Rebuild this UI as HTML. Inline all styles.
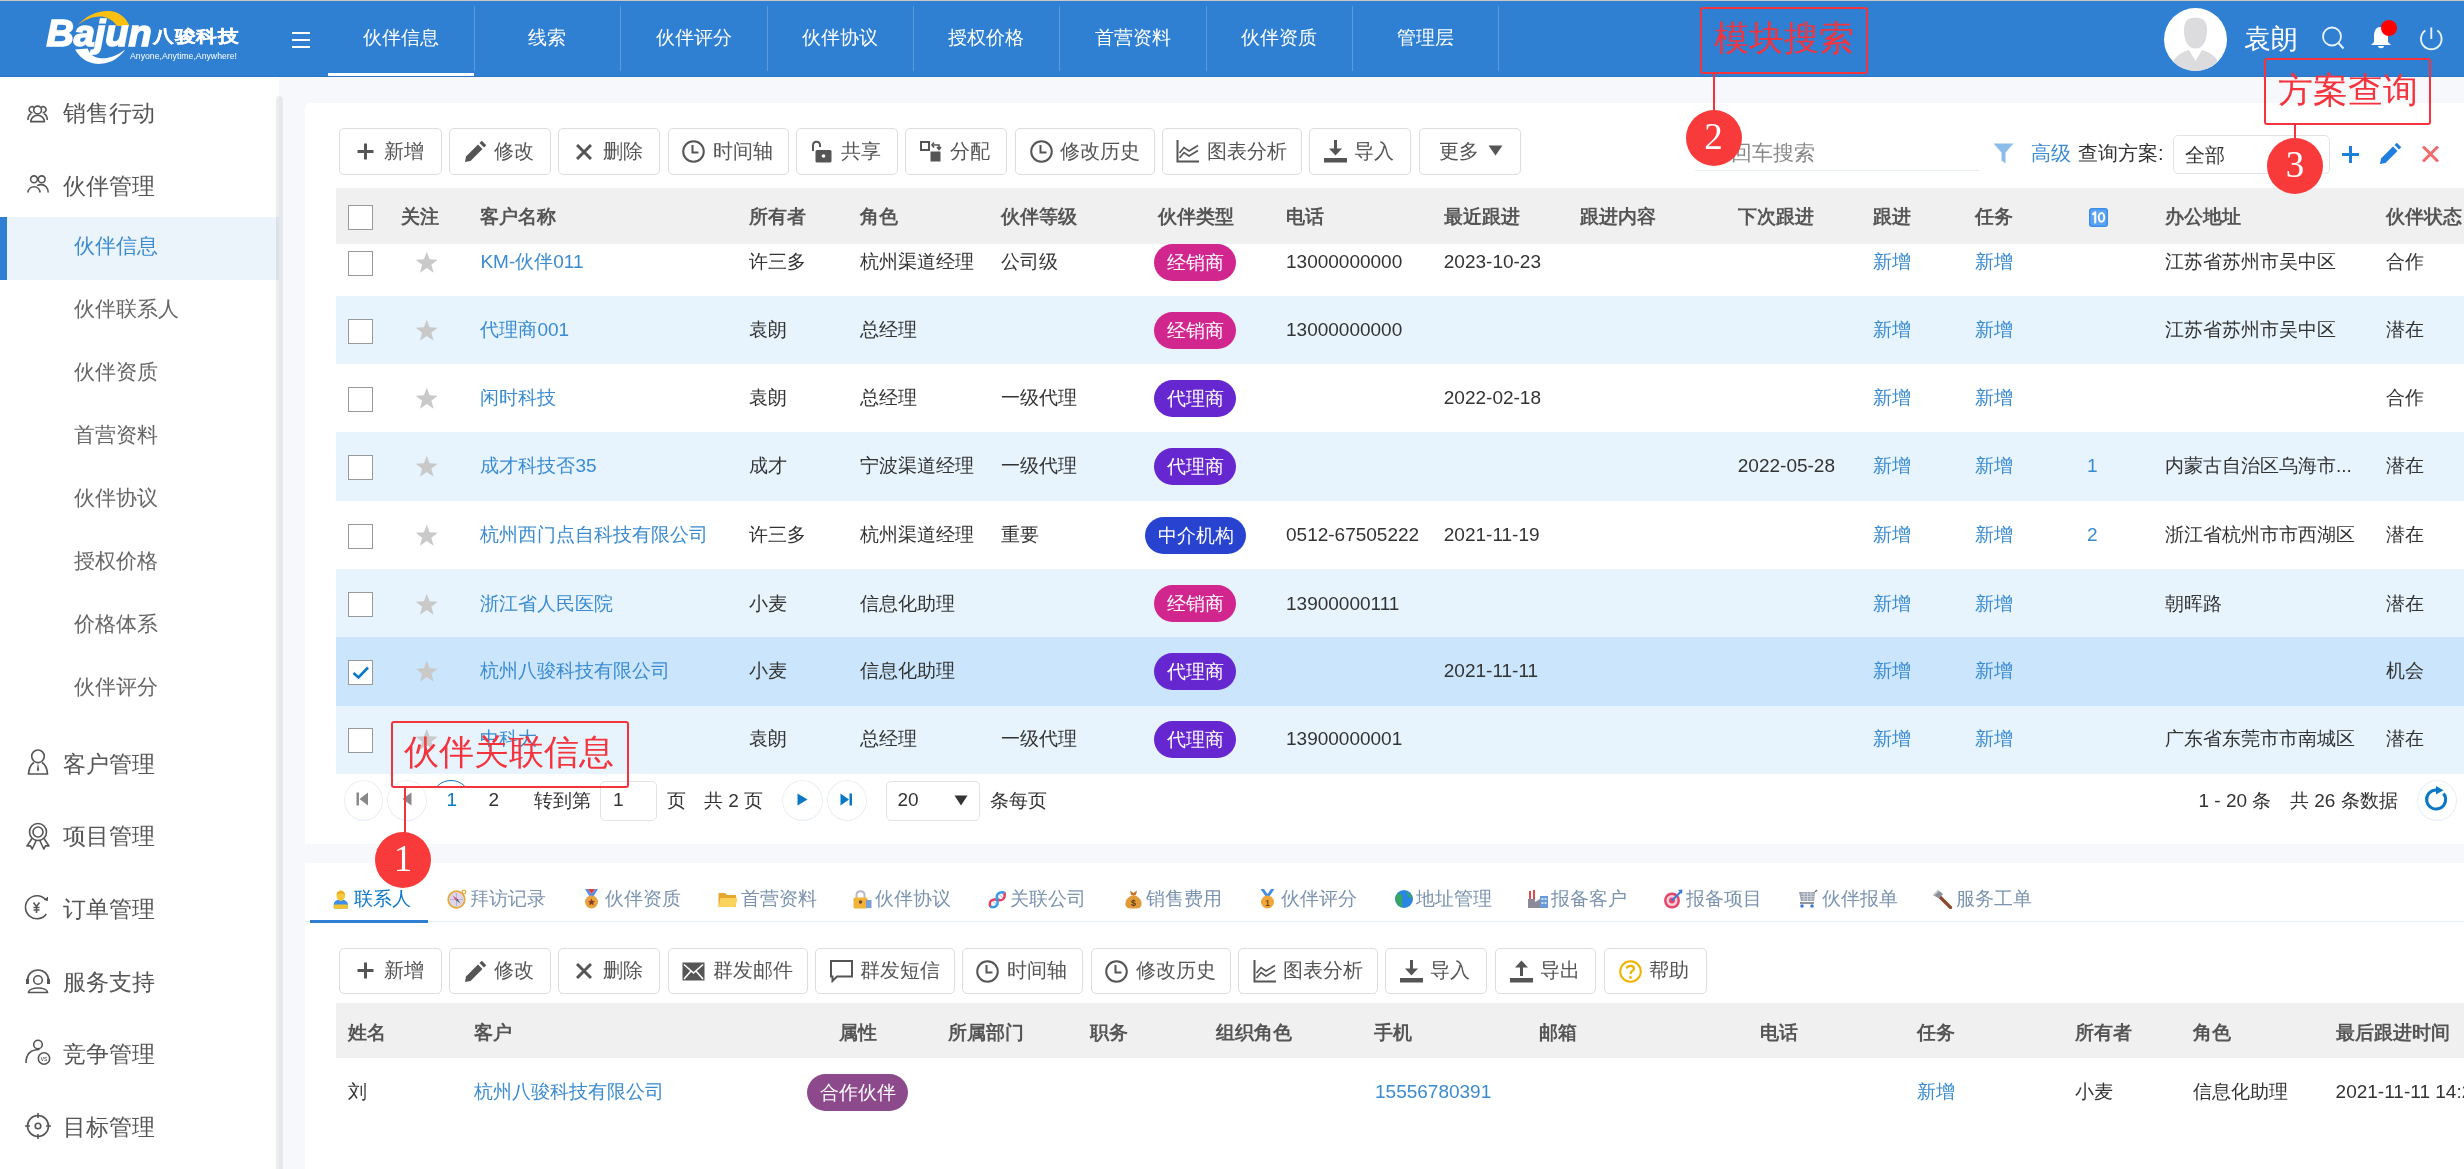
<!DOCTYPE html>
<html><head><meta charset="utf-8">
<style>
*{box-sizing:border-box;margin:0;padding:0}
html,body{width:2464px;height:1169px;overflow:hidden;background:#f6f8fc;font-family:"Liberation Sans",sans-serif;color:#333}
.abs{position:absolute}
#top{position:absolute;left:0;top:0;width:2464px;height:77px;background:#2f80d2;border-top:1px solid #c9c9c9;border-bottom:1px solid #2a76c6}
.nav{position:absolute;top:0;height:74px;width:146px;color:#fff;font-size:19px;text-align:center;line-height:74px}
.sep{position:absolute;top:5px;width:1px;height:65px;background:#5a9ade}
#side{position:absolute;left:0;top:77px;width:279px;height:1092px;background:#fff}
.mi{position:absolute;left:63px;font-size:22.5px;color:#555;line-height:30px}
.si{position:absolute;left:73.5px;font-size:20.8px;color:#666;line-height:30px}
.panel{position:absolute;background:#fff;border-radius:5px}
.btn{position:absolute;height:46px;border:1px solid #ddd;border-radius:5px;background:#fff;font-size:20px;color:#555;line-height:44px}
.th{position:absolute;font-size:19px;font-weight:bold;color:#555;line-height:24px}
.td{position:absolute;font-size:19px;color:#333;line-height:24px;white-space:nowrap}
.lk{color:#3a8bd0}
.row{position:absolute;left:336px;width:2128px;height:68px}
.cb{position:absolute;left:348px;width:25px;height:25px;border:1.5px solid #999;background:#fff}
.star{position:absolute;left:413px;color:#c8c8c8;font-size:26px;line-height:26px}
.tag{position:absolute;height:37px;border-radius:18.5px;color:#fff;font-size:19px;line-height:37px;text-align:center}

.bt{position:absolute;font-size:20px;color:#555;line-height:28px;white-space:nowrap}
html{filter:grayscale(0)}
</style></head><body>
<div id="top">
<svg class="abs" style="left:40px;top:5px" width="210" height="62" viewBox="0 0 210 62">
<path d="M38 19 C 46 10, 56 5, 68 5 C 78 5, 86 11, 89.5 20 L 77 20 C 72 13, 66 10.5, 60 10.5 C 52 10.5, 44 14, 38 19 Z" fill="#fbbf10"/>
<path d="M35 43.5 C 42 56, 54 58.5, 61 57.8 C 72 57, 80 51, 85.3 43.5 C 76 50.5, 68 52.5, 61 52.3 C 55 52, 50 49, 47.7 42.6 Z" fill="#fff"/>
<text x="6.5" y="40" font-family="Liberation Sans" font-weight="bold" font-style="italic" font-size="36" fill="#fff" stroke="#fff" stroke-width="1.6" textLength="105" lengthAdjust="spacingAndGlyphs">Bajun</text>
<text x="90" y="53" font-family="Liberation Sans" font-size="8.5" fill="#fff" textLength="107" lengthAdjust="spacingAndGlyphs">Anyone,Anytime,Anywhere!</text>
</svg>
<div class="abs" style="left:153px;top:21px;font-size:21px;font-weight:bold;color:#fff;line-height:24px;letter-spacing:0.5px;transform:scale(1,0.82);transform-origin:0 100%;-webkit-text-stroke:0.3px #fff">八骏科技</div>
<div class="abs" style="left:292px;top:31px;width:18px;height:2px;background:#fff"></div>
<div class="abs" style="left:292px;top:38px;width:18px;height:2px;background:#fff"></div>
<div class="abs" style="left:292px;top:45px;width:18px;height:2px;background:#fff"></div>
<div class="nav" style="left:328px">伙伴信息</div>
<div class="sep" style="left:474px"></div>
<div class="nav" style="left:474px">线索</div>
<div class="sep" style="left:620px"></div>
<div class="nav" style="left:621px">伙伴评分</div>
<div class="sep" style="left:767px"></div>
<div class="nav" style="left:767px">伙伴协议</div>
<div class="sep" style="left:913px"></div>
<div class="nav" style="left:913px">授权价格</div>
<div class="sep" style="left:1059px"></div>
<div class="nav" style="left:1060px">首营资料</div>
<div class="sep" style="left:1206px"></div>
<div class="nav" style="left:1206px">伙伴资质</div>
<div class="sep" style="left:1352px"></div>
<div class="nav" style="left:1352px">管理层</div>
<div class="sep" style="left:1498px"></div>
<div class="abs" style="left:328px;top:72px;width:146px;height:3px;background:#fff"></div>
<div class="abs" style="left:2164px;top:7px;width:63px;height:63px;border-radius:50%;background:#fff;overflow:hidden">
<svg width="63" height="63" viewBox="0 0 63 63"><path d="M31.5 9.5 C 24 9.5, 20 13, 20 22 C 20 33, 24 40.5, 31.5 40.5 C 39 40.5, 43 33, 43 22 C 43 13, 39 9.5, 31.5 9.5 Z" fill="#dcdcdf"/><path d="M6 63 C 8 50, 16 44.5, 25 42 L 31.5 53 L 38 42 C 47 44.5, 55 50, 57 63 Z" fill="#dcdcdf"/></svg></div>
<div class="abs" style="left:2244px;top:22px;font-size:26.5px;color:#fff;line-height:32px">袁朗</div>
<svg class="abs" style="left:2318px;top:22px" width="32" height="32" viewBox="0 0 32 32"><circle cx="14" cy="13.5" r="9" fill="none" stroke="#eaf2fb" stroke-width="1.8"/><path d="M20.5 20 L25.5 25.5" stroke="#eaf2fb" stroke-width="2"/></svg>
<svg class="abs" style="left:2366px;top:18px" width="34" height="34" viewBox="0 0 34 34"><path d="M15 8 C 9 8, 8 13, 8 18 L 8 23 L 5 26 L 25 26 L 22 23 L 22 18 C 22 13, 21 8, 15 8 Z" fill="#fff"/><path d="M12 27 L18 27 C 18 30, 12 30, 12 27 Z" fill="#fff"/><circle cx="23" cy="9" r="8" fill="#f00"/></svg>
<svg class="abs" style="left:2416px;top:24px" width="30" height="28" viewBox="0 0 30 28"><path d="M9.3 5.6 A 10.3 10.3 0 1 0 21.3 5.6" fill="none" stroke="#eaf2fb" stroke-width="1.9"/><path d="M15.3 2.5 L15.3 14" stroke="#eaf2fb" stroke-width="1.9"/></svg>
</div>
<div id="side">
<div class="abs" style="left:0;top:140px;width:279px;height:63px;background:#ebf3fb"></div>
<div class="abs" style="left:0;top:140px;width:7px;height:63px;background:#2f80d2"></div>
<div class="abs" style="left:276px;top:19px;width:7px;height:1073px;border-radius:3.5px 3.5px 0 0;overflow:hidden"><div style="position:absolute;left:0;top:0;width:3px;height:1073px;background:rgba(0,0,0,0.07)"></div><div style="position:absolute;left:3px;top:0;width:4px;height:1073px;background:#e6e7eb"></div></div>
</div>

<svg class="abs" style="left:25px;top:103px" width="26" height="22" viewBox="0 0 26 22">
<circle cx="12.6" cy="7" r="3.9" fill="none" stroke="#555" stroke-width="1.6"/><path d="M5.8 18.6 A 6.8 6.4 0 0 1 19.4 18.6 Z" fill="none" stroke="#555" stroke-width="1.6"/>
<path d="M9 4.3 A 3 3 0 1 0 7.5 9.6 M6.2 10.8 C 4.2 11.8, 3 14, 2.9 17" fill="none" stroke="#555" stroke-width="1.6"/><path d="M16.2 4.3 A 3 3 0 1 1 17.7 9.6 M19 10.8 C 21 11.8, 22.2 14, 22.3 17" fill="none" stroke="#555" stroke-width="1.6"/>
</svg>
<svg class="abs" style="left:25px;top:174px" width="26" height="22" viewBox="0 0 26 22">
<circle cx="9" cy="5.3" r="3.4" fill="none" stroke="#555" stroke-width="1.6"/><circle cx="16.7" cy="5.3" r="3.4" fill="none" stroke="#555" stroke-width="1.6"/>
<path d="M2.8 18.5 A 6.3 7 0 0 1 15.2 18.5" fill="none" stroke="#555" stroke-width="1.6"/><path d="M12.2 11.6 C 13.5 10.9, 14.8 10.6, 16 10.6 C 20 10.6, 23.2 13.8, 23.2 18.5" fill="none" stroke="#555" stroke-width="1.6"/>
</svg>
<svg class="abs" style="left:24px;top:748px" width="28" height="28" viewBox="0 0 28 28">
<circle cx="14" cy="8.3" r="6.3" fill="none" stroke="#555" stroke-width="1.6"/><path d="M10 14.5 C 6 17, 4.8 21, 4.5 26 L 23.5 26 C 23.2 21, 22 17, 18 14.5" fill="none" stroke="#555" stroke-width="1.6"/><path d="M14 15 L 12.8 22 L 14 23.3 L 15.2 22 Z" fill="#555"/>
</svg>
<svg class="abs" style="left:23px;top:822px" width="30" height="30" viewBox="0 0 30 30">
<circle cx="15" cy="10" r="8.5" fill="none" stroke="#555" stroke-width="1.6"/><circle cx="15" cy="10" r="5" fill="none" stroke="#555" stroke-width="1.6"/>
<path d="M9 16.5 L 4 24 L 7.5 23.8 L 9.2 27 L 13 19" fill="none" stroke="#555" stroke-width="1.6" stroke-linejoin="round"/><path d="M21 16.5 L 26 24 L 22.5 23.8 L 20.8 27 L 17 19" fill="none" stroke="#555" stroke-width="1.6" stroke-linejoin="round"/>
</svg>
<svg class="abs" style="left:23px;top:893px" width="30" height="30" viewBox="0 0 30 30">
<path d="M23.3 21 A 11.5 11.5 0 1 1 22.5 6.5" fill="none" stroke="#555" stroke-width="1.6"/><path d="M21 6.5 L 24.5 7.5 L 24.5 4" fill="#555" stroke="#555" stroke-width="1"/>
<path d="M10.5 9.5 L 13.5 13.5 L 16.5 9.5 M 13.5 13.5 L 13.5 20 M 10.5 14.5 L 16.5 14.5 M 10.5 17 L 16.5 17" fill="none" stroke="#555" stroke-width="1.6" stroke-width="1.5"/>
</svg>
<svg class="abs" style="left:23px;top:966px" width="30" height="30" viewBox="0 0 30 30">
<path d="M4.5 14 A 10.5 10 0 0 1 25.5 14" fill="none" stroke="#555" stroke-width="1.6" stroke-width="2"/><rect x="3" y="13" width="3" height="5" fill="#555"/><rect x="24" y="13" width="3" height="5" fill="#555"/>
<circle cx="15" cy="14" r="4.3" fill="none" stroke="#555" stroke-width="1.6" stroke-width="1.8"/><path d="M5.5 26.5 C 6 20.5, 24 20.5, 24.5 26.5 Z" fill="none" stroke="#555" stroke-width="1.6" stroke-width="1.8"/>
</svg>
<svg class="abs" style="left:23px;top:1038px" width="30" height="30" viewBox="0 0 30 30">
<circle cx="15" cy="6.5" r="4.3" fill="none" stroke="#555" stroke-width="1.6"/><path d="M3 25 C 3 16, 8 11.5, 16.5 11.5" fill="none" stroke="#555" stroke-width="1.6"/><circle cx="21" cy="20.5" r="5.7" fill="none" stroke="#555" stroke-width="1.6"/>
<text x="21" y="23" font-size="6.5" font-family="Liberation Sans" text-anchor="middle" fill="#555">vs</text>
</svg>
<svg class="abs" style="left:23px;top:1111px" width="30" height="30" viewBox="0 0 30 30">
<circle cx="15" cy="15" r="10.5" fill="none" stroke="#555" stroke-width="1.6"/><circle cx="15" cy="15" r="2.8" fill="none" stroke="#555" stroke-width="1.6"/>
<path d="M15 2 L15 7 M15 23 L15 28 M2 15 L7 15 M23 15 L28 15" fill="none" stroke="#555" stroke-width="1.6"/>
</svg>
<div class="mi" style="top:98.8px">销售行动</div>
<div class="mi" style="top:171.5px">伙伴管理</div>
<div class="mi" style="top:749.5px">客户管理</div>
<div class="mi" style="top:821.9px">项目管理</div>
<div class="mi" style="top:894.5px">订单管理</div>
<div class="mi" style="top:967.8px">服务支持</div>
<div class="mi" style="top:1039.5px">竞争管理</div>
<div class="mi" style="top:1112.8px">目标管理</div>
<div class="si" style="top:230.5px;color:#3a8bd0">伙伴信息</div>
<div class="si" style="top:293.6px;color:#666">伙伴联系人</div>
<div class="si" style="top:356.7px;color:#666">伙伴资质</div>
<div class="si" style="top:419.8px;color:#666">首营资料</div>
<div class="si" style="top:482.9px;color:#666">伙伴协议</div>
<div class="si" style="top:546.0px;color:#666">授权价格</div>
<div class="si" style="top:609.1px;color:#666">价格体系</div>
<div class="si" style="top:672.2px;color:#666">伙伴评分</div>


<div class="panel" style="left:305px;top:103px;width:2200px;height:741px;border-radius:5px 0 0 0"></div>
<div class="panel" style="left:305px;top:863px;width:2200px;height:400px;border-radius:0"></div>
<div class="btn" style="left:339px;top:128px;width:103px;height:47px"></div><svg class="abs" style="left:357px;top:143px" width="17" height="17" viewBox="0 0 17 17"><path d="M8.5 0.5 V16.5 M0.5 8.5 H16.5" stroke="#555" stroke-width="3"/></svg><div class="bt" style="left:384px;top:136.5px">新增</div>
<div class="btn" style="left:449px;top:128px;width:102px;height:47px"></div><svg class="abs" style="left:464px;top:140px" width="23" height="23" viewBox="0 0 23 23"><path d="M1 22 L2 16.5 L14 4.5 L18.5 9 L6.5 21 Z" fill="#555"/><path d="M3.5 17.5 L5.5 19.5" stroke="#fff" stroke-width="0"/><path d="M15.5 3 L17.8 0.7 L22.3 5.2 L20 7.5 Z" fill="#555"/></svg><div class="bt" style="left:494px;top:136.5px">修改</div>
<div class="btn" style="left:558px;top:128px;width:102px;height:47px"></div><svg class="abs" style="left:576px;top:144px" width="16" height="16" viewBox="0 0 16 16"><path d="M1 1 L15 15 M15 1 L1 15" stroke="#555" stroke-width="3"/></svg><div class="bt" style="left:603px;top:136.5px">删除</div>
<div class="btn" style="left:668px;top:128px;width:121px;height:47px"></div><svg class="abs" style="left:682px;top:140px" width="23" height="23" viewBox="0 0 23 23"><circle cx="11.5" cy="11.5" r="10.3" fill="none" stroke="#555" stroke-width="2"/><path d="M10.5 5 V12.5 H16.5" fill="none" stroke="#555" stroke-width="2"/></svg><div class="bt" style="left:713px;top:136.5px">时间轴</div>
<div class="btn" style="left:796px;top:128px;width:102px;height:47px"></div><svg class="abs" style="left:810px;top:140px" width="22" height="23" viewBox="0 0 22 23"><path d="M3 11 V5.5 C3 0.5, 10 0.5, 10 5.5 V7" fill="none" stroke="#555" stroke-width="2"/><rect x="5.5" y="10" width="16" height="12.5" rx="1.5" fill="#555"/><circle cx="13.5" cy="16" r="1.8" fill="#fff"/></svg><div class="bt" style="left:841px;top:136.5px">共享</div>
<div class="btn" style="left:905px;top:128px;width:102px;height:47px"></div><svg class="abs" style="left:920px;top:141px" width="22" height="21" viewBox="0 0 22 21"><rect x="1" y="1" width="8" height="8" fill="none" stroke="#555" stroke-width="2"/><rect x="10.5" y="10.5" width="10" height="10" fill="#555"/><path d="M12 4 H19 V8 M17 6 L19 8.5 L21 6" fill="none" stroke="#555" stroke-width="1.6"/><path d="M14 1.5 L12 4 L14 6.5" fill="none" stroke="#555" stroke-width="1.6"/></svg><div class="bt" style="left:950px;top:136.5px">分配</div>
<div class="btn" style="left:1015px;top:128px;width:140px;height:47px"></div><svg class="abs" style="left:1030px;top:140px" width="23" height="23" viewBox="0 0 23 23"><circle cx="11.5" cy="11.5" r="10.3" fill="none" stroke="#555" stroke-width="2"/><path d="M10.5 5 V12.5 H16.5" fill="none" stroke="#555" stroke-width="2"/></svg><div class="bt" style="left:1060px;top:136.5px">修改历史</div>
<div class="btn" style="left:1162px;top:128px;width:140px;height:47px"></div><svg class="abs" style="left:1176px;top:140px" width="23" height="23" viewBox="0 0 23 23"><path d="M1.5 0 V21.5 H23" fill="none" stroke="#555" stroke-width="2"/><path d="M3.5 13 L8 7.5 L13 11 L22 5.5 M3.5 18 L8 12.5 L13 16 L22 10.5" fill="none" stroke="#555" stroke-width="1.6"/></svg><div class="bt" style="left:1207px;top:136.5px">图表分析</div>
<div class="btn" style="left:1309px;top:128px;width:102px;height:47px"></div><svg class="abs" style="left:1324px;top:140px" width="23" height="23" viewBox="0 0 23 23"><path d="M11.5 0 V11" stroke="#555" stroke-width="3"/><path d="M5 8.5 L11.5 15.5 L18 8.5 Z" fill="#555"/><rect x="0" y="18" width="23" height="4.5" fill="#555"/></svg><div class="bt" style="left:1354px;top:136.5px">导入</div>
<div class="btn" style="left:1419px;top:128px;width:102px;height:47px"></div><div class="bt" style="left:1438.5px;top:136.5px">更多</div>
<svg class="abs" style="left:1488px;top:145px" width="15" height="11" viewBox="0 0 15 11"><path d="M0.5 0.5 H14.5 L7.5 10.5 Z" fill="#555"/></svg>
<div class="abs" style="left:1695px;top:170px;width:285px;height:1px;background:#e6edf5"></div>
<div class="td" style="left:1731px;top:140.5px;font-size:20.8px;line-height:24px;color:#888">回车搜索</div>
<svg class="abs" style="left:1993px;top:143px" width="21" height="21" viewBox="0 0 21 21"><path d="M0.5 0.5 H20.5 L12.5 9.5 V20.5 L8.5 17.5 V9.5 Z" fill="#8cbdea"/></svg>
<div class="td" style="left:2031px;top:141px;font-size:20px;color:#3d8bd0">高级</div>
<div class="td" style="left:2078px;top:141px;font-size:20px;color:#333">查询方案:</div>
<div class="abs" style="left:2173px;top:135px;width:157px;height:39px;border:1px solid #e3e3e3;border-radius:5px;background:#fff"></div>
<div class="td" style="left:2185px;top:143px;font-size:20px;color:#333">全部</div>
<svg class="abs" style="left:2342px;top:146px" width="17" height="17" viewBox="0 0 17 17"><path d="M8.5 0 V17 M0 8.5 H17" stroke="#1e7fd8" stroke-width="3"/></svg>
<svg class="abs" style="left:2379px;top:142px" width="23" height="23" viewBox="0 0 23 23"><path d="M1 22 L2 16.5 L14 4.5 L18.5 9 L6.5 21 Z" fill="#1e7fe0"/><path d="M3.5 17.5 L5.5 19.5" stroke="#fff" stroke-width="0"/><path d="M15.5 3 L17.8 0.7 L22.3 5.2 L20 7.5 Z" fill="#1e7fe0"/></svg>
<svg class="abs" style="left:2422px;top:146px" width="17" height="16" viewBox="0 0 17 16"><path d="M1 0.5 L16 15.5 M16 0.5 L1 15.5" stroke="#f26a6a" stroke-width="3"/></svg>
<div class="abs" style="left:336px;top:188px;width:2128px;height:56px;background:#f0f0f0"></div>
<div class="abs" style="left:336px;top:244px;width:2128px;height:52px;background:#fff"></div>
<div class="abs" style="left:336px;top:296px;width:2128px;height:68px;background:#e7f4fe"></div>
<div class="abs" style="left:336px;top:364px;width:2128px;height:68px;background:#fff"></div>
<div class="abs" style="left:336px;top:432px;width:2128px;height:69px;background:#e7f4fe"></div>
<div class="abs" style="left:336px;top:501px;width:2128px;height:68px;background:#fff"></div>
<div class="abs" style="left:336px;top:569px;width:2128px;height:68px;background:#e7f4fe"></div>
<div class="abs" style="left:336px;top:637px;width:2128px;height:69px;background:#cbe6fc"></div>
<div class="abs" style="left:336px;top:706px;width:2128px;height:68px;background:#e7f4fe"></div>
<div class="th" style="left:401px;top:205px">关注</div>
<div class="th" style="left:480.4px;top:205px">客户名称</div>
<div class="th" style="left:748.7px;top:205px">所有者</div>
<div class="th" style="left:859.6px;top:205px">角色</div>
<div class="th" style="left:1001.3px;top:205px">伙伴等级</div>
<div class="th" style="left:1157.7px;top:205px">伙伴类型</div>
<div class="th" style="left:1286px;top:205px">电话</div>
<div class="th" style="left:1443.8px;top:205px">最近跟进</div>
<div class="th" style="left:1579.5px;top:205px">跟进内容</div>
<div class="th" style="left:1737.8px;top:205px">下次跟进</div>
<div class="th" style="left:1872.8px;top:205px">跟进</div>
<div class="th" style="left:1975.2px;top:205px">任务</div>
<div class="th" style="left:2164.5px;top:205px">办公地址</div>
<div class="th" style="left:2386px;top:205px">伙伴状态</div>
<div class="cb" style="top:205px"></div>
<svg class="abs" style="left:2089px;top:208px" width="19" height="19" viewBox="0 0 19 19"><rect x="0" y="0" width="19" height="19" rx="3" fill="#3d8ce8"/><rect x="1.5" y="1.5" width="16" height="16" rx="1.5" fill="#5aa4f2"/><path d="M3.8 6.2 L6.2 4.2 V14.5" fill="none" stroke="#fff" stroke-width="2.1" stroke-linecap="round" stroke-linejoin="round"/><ellipse cx="12.5" cy="9.3" rx="2.8" ry="4.4" fill="none" stroke="#fff" stroke-width="2"/></svg>
<div class="cb" style="top:250.5px"></div>
<svg class="abs" style="left:414.5px;top:251.0px" width="23.5" height="23" viewBox="0 0 24 23"><path d="M12 0.5 L14.9 8.3 L23.3 8.6 L16.7 13.8 L19 21.9 L12 17.2 L5 21.9 L7.3 13.8 L0.7 8.6 L9.1 8.3 Z" fill="#c9c9c9"/></svg>
<div class="td lk" style="left:480.4px;top:250px">KM-伙伴011</div>
<div class="td" style="left:748.7px;top:250px">许三多</div>
<div class="td" style="left:859.6px;top:250px">杭州渠道经理</div>
<div class="td" style="left:1001.3px;top:250px">公司级</div>
<div class="tag" style="left:1154px;top:243.5px;width:82px;background:#d2268f">经销商</div>
<div class="td" style="left:1286px;top:250px">13000000000</div>
<div class="td" style="left:1443.8px;top:250px">2023-10-23</div>
<div class="td lk" style="left:1872.8px;top:250px">新增</div>
<div class="td lk" style="left:1975.2px;top:250px">新增</div>
<div class="td" style="left:2165px;top:250px">江苏省苏州市吴中区</div>
<div class="td" style="left:2386px;top:250px">合作</div>
<div class="cb" style="top:318.5px"></div>
<svg class="abs" style="left:414.5px;top:319.0px" width="23.5" height="23" viewBox="0 0 24 23"><path d="M12 0.5 L14.9 8.3 L23.3 8.6 L16.7 13.8 L19 21.9 L12 17.2 L5 21.9 L7.3 13.8 L0.7 8.6 L9.1 8.3 Z" fill="#c9c9c9"/></svg>
<div class="td lk" style="left:480.4px;top:318px">代理商001</div>
<div class="td" style="left:748.7px;top:318px">袁朗</div>
<div class="td" style="left:859.6px;top:318px">总经理</div>
<div class="tag" style="left:1154px;top:311.5px;width:82px;background:#d2268f">经销商</div>
<div class="td" style="left:1286px;top:318px">13000000000</div>
<div class="td lk" style="left:1872.8px;top:318px">新增</div>
<div class="td lk" style="left:1975.2px;top:318px">新增</div>
<div class="td" style="left:2165px;top:318px">江苏省苏州市吴中区</div>
<div class="td" style="left:2386px;top:318px">潜在</div>
<div class="cb" style="top:386.5px"></div>
<svg class="abs" style="left:414.5px;top:387.0px" width="23.5" height="23" viewBox="0 0 24 23"><path d="M12 0.5 L14.9 8.3 L23.3 8.6 L16.7 13.8 L19 21.9 L12 17.2 L5 21.9 L7.3 13.8 L0.7 8.6 L9.1 8.3 Z" fill="#c9c9c9"/></svg>
<div class="td lk" style="left:480.4px;top:386px">闲时科技</div>
<div class="td" style="left:748.7px;top:386px">袁朗</div>
<div class="td" style="left:859.6px;top:386px">总经理</div>
<div class="td" style="left:1001.3px;top:386px">一级代理</div>
<div class="tag" style="left:1154px;top:379.5px;width:82px;background:#6626d0">代理商</div>
<div class="td" style="left:1443.8px;top:386px">2022-02-18</div>
<div class="td lk" style="left:1872.8px;top:386px">新增</div>
<div class="td lk" style="left:1975.2px;top:386px">新增</div>
<div class="td" style="left:2386px;top:386px">合作</div>
<div class="cb" style="top:454.8px"></div>
<svg class="abs" style="left:414.5px;top:455.3px" width="23.5" height="23" viewBox="0 0 24 23"><path d="M12 0.5 L14.9 8.3 L23.3 8.6 L16.7 13.8 L19 21.9 L12 17.2 L5 21.9 L7.3 13.8 L0.7 8.6 L9.1 8.3 Z" fill="#c9c9c9"/></svg>
<div class="td lk" style="left:480.4px;top:454.3px">成才科技否35</div>
<div class="td" style="left:748.7px;top:454.3px">成才</div>
<div class="td" style="left:859.6px;top:454.3px">宁波渠道经理</div>
<div class="td" style="left:1001.3px;top:454.3px">一级代理</div>
<div class="tag" style="left:1154px;top:447.8px;width:82px;background:#6626d0">代理商</div>
<div class="td" style="left:1737.8px;top:454.3px">2022-05-28</div>
<div class="td lk" style="left:1872.8px;top:454.3px">新增</div>
<div class="td lk" style="left:1975.2px;top:454.3px">新增</div>
<div class="td lk" style="left:2087px;top:454.3px">1</div>
<div class="td" style="left:2165px;top:454.3px">内蒙古自治区乌海市...</div>
<div class="td" style="left:2386px;top:454.3px">潜在</div>
<div class="cb" style="top:523.5px"></div>
<svg class="abs" style="left:414.5px;top:524.0px" width="23.5" height="23" viewBox="0 0 24 23"><path d="M12 0.5 L14.9 8.3 L23.3 8.6 L16.7 13.8 L19 21.9 L12 17.2 L5 21.9 L7.3 13.8 L0.7 8.6 L9.1 8.3 Z" fill="#c9c9c9"/></svg>
<div class="td lk" style="left:480.4px;top:523px">杭州西门点自科技有限公司</div>
<div class="td" style="left:748.7px;top:523px">许三多</div>
<div class="td" style="left:859.6px;top:523px">杭州渠道经理</div>
<div class="td" style="left:1001.3px;top:523px">重要</div>
<div class="tag" style="left:1145px;top:516.5px;width:101px;background:#2743d0">中介机构</div>
<div class="td" style="left:1286px;top:523px">0512-67505222</div>
<div class="td" style="left:1443.8px;top:523px">2021-11-19</div>
<div class="td lk" style="left:1872.8px;top:523px">新增</div>
<div class="td lk" style="left:1975.2px;top:523px">新增</div>
<div class="td lk" style="left:2087px;top:523px">2</div>
<div class="td" style="left:2165px;top:523px">浙江省杭州市市西湖区</div>
<div class="td" style="left:2386px;top:523px">潜在</div>
<div class="cb" style="top:592.0px"></div>
<svg class="abs" style="left:414.5px;top:592.5px" width="23.5" height="23" viewBox="0 0 24 23"><path d="M12 0.5 L14.9 8.3 L23.3 8.6 L16.7 13.8 L19 21.9 L12 17.2 L5 21.9 L7.3 13.8 L0.7 8.6 L9.1 8.3 Z" fill="#c9c9c9"/></svg>
<div class="td lk" style="left:480.4px;top:591.5px">浙江省人民医院</div>
<div class="td" style="left:748.7px;top:591.5px">小麦</div>
<div class="td" style="left:859.6px;top:591.5px">信息化助理</div>
<div class="tag" style="left:1154px;top:585.0px;width:82px;background:#d2268f">经销商</div>
<div class="td" style="left:1286px;top:591.5px">13900000111</div>
<div class="td lk" style="left:1872.8px;top:591.5px">新增</div>
<div class="td lk" style="left:1975.2px;top:591.5px">新增</div>
<div class="td" style="left:2165px;top:591.5px">朝晖路</div>
<div class="td" style="left:2386px;top:591.5px">潜在</div>
<div class="cb" style="top:659.5px"></div>
<svg class="abs" style="left:350px;top:660.5px" width="21" height="21" viewBox="0 0 21 21"><path d="M3.5 12 L8.5 16.5 L18 6.5" fill="none" stroke="#0a78c8" stroke-width="2.6"/></svg>
<svg class="abs" style="left:414.5px;top:660.0px" width="23.5" height="23" viewBox="0 0 24 23"><path d="M12 0.5 L14.9 8.3 L23.3 8.6 L16.7 13.8 L19 21.9 L12 17.2 L5 21.9 L7.3 13.8 L0.7 8.6 L9.1 8.3 Z" fill="#c9c9c9"/></svg>
<div class="td lk" style="left:480.4px;top:659px">杭州八骏科技有限公司</div>
<div class="td" style="left:748.7px;top:659px">小麦</div>
<div class="td" style="left:859.6px;top:659px">信息化助理</div>
<div class="tag" style="left:1154px;top:652.5px;width:82px;background:#6626d0">代理商</div>
<div class="td" style="left:1443.8px;top:659px">2021-11-11</div>
<div class="td lk" style="left:1872.8px;top:659px">新增</div>
<div class="td lk" style="left:1975.2px;top:659px">新增</div>
<div class="td" style="left:2386px;top:659px">机会</div>
<div class="cb" style="top:727.8px"></div>
<svg class="abs" style="left:414.5px;top:728.3px" width="23.5" height="23" viewBox="0 0 24 23"><path d="M12 0.5 L14.9 8.3 L23.3 8.6 L16.7 13.8 L19 21.9 L12 17.2 L5 21.9 L7.3 13.8 L0.7 8.6 L9.1 8.3 Z" fill="#c9c9c9"/></svg>
<div class="td lk" style="left:480.4px;top:727.3px">中科大</div>
<div class="td" style="left:748.7px;top:727.3px">袁朗</div>
<div class="td" style="left:859.6px;top:727.3px">总经理</div>
<div class="td" style="left:1001.3px;top:727.3px">一级代理</div>
<div class="tag" style="left:1154px;top:720.8px;width:82px;background:#6626d0">代理商</div>
<div class="td" style="left:1286px;top:727.3px">13900000001</div>
<div class="td lk" style="left:1872.8px;top:727.3px">新增</div>
<div class="td lk" style="left:1975.2px;top:727.3px">新增</div>
<div class="td" style="left:2165px;top:727.3px">广东省东莞市市南城区</div>
<div class="td" style="left:2386px;top:727.3px">潜在</div>
<div class="abs" style="left:343.5px;top:779.5px;width:39.5px;height:41px;border:1px solid #e9eef6;border-radius:50%"></div>
<div class="abs" style="left:386.6px;top:779.5px;width:40px;height:41px;border:1px solid #e9eef6;border-radius:50%"></div>
<svg class="abs" style="left:356px;top:792px" width="13" height="14" viewBox="0 0 13 14"><rect x="0.5" y="0.5" width="2.5" height="13" fill="#888"/><path d="M12 0.5 V13.5 L3.5 7 Z" fill="#888"/></svg>
<svg class="abs" style="left:402px;top:792px" width="10" height="14" viewBox="0 0 10 14"><path d="M9.5 0.5 V13.5 L0.5 7 Z" fill="#888"/></svg>
<div class="abs" style="left:430.5px;top:780px;width:40px;height:7px;overflow:hidden"><div style="width:40px;height:40px;border:1.5px solid #0b78c6;border-radius:50%"></div></div>
<div class="td" style="left:446.5px;top:788px;font-size:19px;color:#0b78c6">1</div>
<div class="td" style="left:488.5px;top:788px;font-size:19px;color:#333">2</div>
<div class="td" style="left:533.5px;top:789px;font-size:19px;color:#333">转到第</div>
<div class="abs" style="left:600px;top:781px;width:57px;height:40px;border:1px solid #e3e3e3;border-radius:5px"></div>
<div class="td" style="left:613px;top:788px;font-size:19px;color:#333">1</div>
<div class="td" style="left:667px;top:789px;font-size:19px;color:#333">页</div>
<div class="td" style="left:704px;top:789px;font-size:19px;color:#333">共 2 页</div>
<div class="abs" style="left:782px;top:779.5px;width:40.5px;height:41px;border:1px solid #e9eef6;border-radius:50%"></div>
<div class="abs" style="left:826.5px;top:779.5px;width:40px;height:41px;border:1px solid #e9eef6;border-radius:50%"></div>
<svg class="abs" style="left:796.5px;top:793px" width="11" height="13" viewBox="0 0 11 13"><path d="M0.5 0.5 V12.5 L10.5 6.5 Z" fill="#0b78c6"/></svg>
<svg class="abs" style="left:839.5px;top:793px" width="13" height="13" viewBox="0 0 13 13"><path d="M0.5 0.5 V12.5 L9 6.5 Z" fill="#0b78c6"/><rect x="9.5" y="0.5" width="2.5" height="12" fill="#0b78c6"/></svg>
<div class="abs" style="left:886px;top:781px;width:93.5px;height:39.5px;border:1px solid #e3e3e3;border-radius:5px"></div>
<div class="td" style="left:897.5px;top:788px;font-size:19px;color:#333">20</div>
<svg class="abs" style="left:953.5px;top:794.5px" width="14" height="11" viewBox="0 0 14 11"><path d="M0.5 0.5 H13.5 L7 10.5 Z" fill="#333"/></svg>
<div class="td" style="left:990px;top:789px;font-size:19px;color:#333">条每页</div>
<div class="td" style="left:2198.5px;top:789px;font-size:19px;color:#333">1 - 20 条</div>
<div class="td" style="left:2290px;top:789px;font-size:19px;color:#333">共 26 条数据</div>
<div class="abs" style="left:2417px;top:779.5px;width:40px;height:41px;border:1px solid #e9eef6;border-radius:50%"></div>
<svg class="abs" style="left:2423px;top:786px" width="27" height="27" viewBox="0 0 27 27"><path d="M20.5 7.5 A 9.5 9.5 0 1 1 13.5 4" fill="none" stroke="#0b78c6" stroke-width="3"/><path d="M13 0 L20.5 4.2 L13 8.5 Z" fill="#0b78c6"/></svg>
<div class="abs" style="left:305px;top:921px;width:2159px;height:1px;background:#e6edf4"></div>
<div class="abs" style="left:310px;top:920px;width:118px;height:3px;background:#2f7fd3"></div>
<svg class="abs" style="left:332px;top:889px" width="19" height="20" viewBox="0 0 19 20"><path d="M1.8 19.5 V15.5 C 1.8 12, 5 10.5, 8.8 10.5 C 12.6 10.5, 15.8 12, 15.8 15.5 V19.5 Z" fill="#3f8ee8"/><rect x="1.5" y="15.5" width="14.8" height="4.2" rx="2" fill="#f5c330"/><ellipse cx="8.8" cy="6.6" rx="4.3" ry="5.3" fill="#f7c83a"/><path d="M4.6 5.5 C 4.6 1.5, 13 1.5, 13 5.5 C 11 3.8, 6.6 3.8, 4.6 5.5 Z" fill="#e6a020"/></svg>
<div class="bt" style="left:353.9px;top:885px;color:#0b78c8;font-size:19px">联系人</div>
<svg class="abs" style="left:447px;top:889px" width="20" height="20" viewBox="0 0 20 20"><circle cx="9.5" cy="10.5" r="8.3" fill="#dcd6ea" stroke="#e8a53a" stroke-width="1.7"/><circle cx="17" cy="3" r="1.8" fill="none" stroke="#e8a53a" stroke-width="1.2"/><path d="M9.5 4 V17 M3 10.5 H16" stroke="#a8a4b8" stroke-width="0.7"/><path d="M5.5 6.5 L10.3 9.7 L8.7 11.3 Z" fill="#e83a8a"/><path d="M13.5 14.5 L8.7 11.3 L10.3 9.7 Z" fill="#5a5a6a"/></svg>
<div class="bt" style="left:470px;top:885px;color:#7b93ae;font-size:19px">拜访记录</div>
<svg class="abs" style="left:582px;top:889px" width="19" height="20" viewBox="0 0 19 20"><path d="M3 0 L8 8 L11 8 L16 0 L13 0 L9.5 5 L6 0 Z" fill="#5a8de0"/><path d="M6 0 L9.5 5 L13 0 Z" fill="#e04040"/><circle cx="9.5" cy="13" r="6.5" fill="#e6a33e"/><path d="M9.5 9.5 L10.6 12 L13 12.2 L11.2 13.8 L11.8 16.3 L9.5 15 L7.2 16.3 L7.8 13.8 L6 12.2 L8.4 12 Z" fill="#8a3a2a"/></svg>
<div class="bt" style="left:604.5px;top:885px;color:#7b93ae;font-size:19px">伙伴资质</div>
<svg class="abs" style="left:718px;top:889px" width="20" height="20" viewBox="0 0 20 20"><path d="M0.5 4 L7 4 L9 6 L18 6 L18 18 L0.5 18 Z" fill="#e6a82c"/><path d="M2.5 9 L19.5 9 L17.5 18 L0.5 18 Z" fill="#fbd25a"/></svg>
<div class="bt" style="left:741px;top:885px;color:#7b93ae;font-size:19px">首营资料</div>
<svg class="abs" style="left:852px;top:889px" width="20" height="20" viewBox="0 0 20 20"><path d="M4.5 9 V6 C4.5 1, 12.5 1, 12.5 6 V9" fill="none" stroke="#b7b7c7" stroke-width="2"/><rect x="1.5" y="8.5" width="14" height="11" rx="1.5" fill="#f1b33a"/><circle cx="8.5" cy="13" r="1.7" fill="#6a4a2a"/><rect x="14" y="11" width="5.5" height="8" fill="#7a9fd8"/></svg>
<div class="bt" style="left:875.3px;top:885px;color:#7b93ae;font-size:19px">伙伴协议</div>
<svg class="abs" style="left:988px;top:889px" width="20" height="20" viewBox="0 0 20 20"><g transform="rotate(-45 10 10) translate(-1.5 0) scale(1.15 1)"><path d="M2.5 7 H4 M5.5 6.2 V13.8 M8 7 V13 M11 7 V13 M13.5 6.2 V13.8 M16 7 V13" stroke="#b8c4e8" stroke-width="1"/><path d="M0.5 10 C 3 5, 6.5 5, 9 10 S 15 15, 18 10" fill="none" stroke="#e8405a" stroke-width="2.3"/><path d="M0.5 10 C 3 15, 6.5 15, 9 10 S 15 5, 18 10" fill="none" stroke="#3a9ae8" stroke-width="2.3"/></g></svg>
<div class="bt" style="left:1010.4px;top:885px;color:#7b93ae;font-size:19px">关联公司</div>
<svg class="abs" style="left:1124px;top:889px" width="19" height="20" viewBox="0 0 19 20"><path d="M9.5 6 C3 8, 1 12, 1.5 16 C2 19, 5 19.5, 9.5 19.5 C14 19.5, 17 19, 17.5 16 C18 12, 16 8, 9.5 6 Z" fill="#e09a3a"/><path d="M6 1.5 L9.5 4 L13 1.5 L12 6 L7 6 Z" fill="#c9782a"/><text x="9.5" y="16.5" font-size="9" font-family="Liberation Sans" font-weight="bold" text-anchor="middle" fill="#5a3a10">$</text></svg>
<div class="bt" style="left:1145.8px;top:885px;color:#7b93ae;font-size:19px">销售费用</div>
<svg class="abs" style="left:1258px;top:889px" width="19" height="20" viewBox="0 0 19 20"><path d="M2.5 0 L8 8 L11 8 L16.5 0 L13 0 L9.5 5 L6 0 Z" fill="#4a8de0"/><circle cx="9.5" cy="13" r="6.5" fill="#f0a638"/><text x="9.5" y="16.5" font-size="8.5" font-family="Liberation Sans" font-weight="bold" text-anchor="middle" fill="#7a4a10">1</text></svg>
<div class="bt" style="left:1280.5px;top:885px;color:#7b93ae;font-size:19px">伙伴评分</div>
<svg class="abs" style="left:1394px;top:889px" width="20" height="20" viewBox="0 0 20 20"><circle cx="10" cy="10" r="9" fill="#2a86e0"/><path d="M4 4 C7 5, 9 7, 8 10 C7 13, 9 15, 8 18.5 C5 17, 2 14, 2 10 C2 7, 3 5, 4 4 Z M12 2 C14 4, 16 5, 18 8 C17 9, 15 9, 14 7 Z" fill="#3aa85a"/></svg>
<div class="bt" style="left:1416px;top:885px;color:#7b93ae;font-size:19px">地址管理</div>
<svg class="abs" style="left:1528px;top:889px" width="20" height="20" viewBox="0 0 20 20"><rect x="1" y="2" width="2" height="9" fill="#e04a4a"/><rect x="5" y="1" width="2" height="10" fill="#e04a4a"/><path d="M0 10 L7 10 L7 13 L12 10 L12 19 L0 19 Z" fill="#8a8a9a"/><rect x="12" y="7" width="8" height="12" fill="#6a9ad8"/><rect x="13.5" y="9" width="2" height="2" fill="#cde"/><rect x="16.5" y="9" width="2" height="2" fill="#cde"/><rect x="13.5" y="13" width="2" height="2" fill="#cde"/><rect x="16.5" y="13" width="2" height="2" fill="#cde"/></svg>
<div class="bt" style="left:1550.6px;top:885px;color:#7b93ae;font-size:19px">报备客户</div>
<svg class="abs" style="left:1663px;top:889px" width="21" height="20" viewBox="0 0 21 20"><circle cx="9" cy="11.5" r="8" fill="#e6456a"/><circle cx="9" cy="11.5" r="5.5" fill="#f5d0da"/><circle cx="9" cy="11.5" r="3" fill="#e6456a"/><path d="M9 11.5 L18 2.5" stroke="#3a7ad8" stroke-width="2"/><path d="M15 1 L19.5 0.5 L19 5 Z" fill="#3a7ad8"/></svg>
<div class="bt" style="left:1686px;top:885px;color:#7b93ae;font-size:19px">报备项目</div>
<svg class="abs" style="left:1798px;top:889px" width="21" height="20" viewBox="0 0 21 20"><path d="M1 3 L17 3 L16 12 L3 12 Z" fill="#9aa0ae"/><path d="M3 5 H16 M3 7.5 H16 M4 10 H15.5 M6 3 V12 M9.5 3 V12 M13 3 V12" stroke="#d8dce4" stroke-width="0.8"/><path d="M17 3 L19 1" stroke="#6a7080" stroke-width="1.5"/><path d="M2 14 H16" stroke="#6a7080" stroke-width="1.5"/><circle cx="4" cy="17" r="1.8" fill="#3a7ad8"/><circle cx="14" cy="17" r="1.8" fill="#3a7ad8"/></svg>
<div class="bt" style="left:1821.6px;top:885px;color:#7b93ae;font-size:19px">伙伴报单</div>
<svg class="abs" style="left:1932px;top:889px" width="21" height="20" viewBox="0 0 21 20"><path d="M8 8 L18.5 18.5" stroke="#8a4a2a" stroke-width="3.2" stroke-linecap="round"/><path d="M1 6 L6 1 L11 5 L7 9.5 Z" fill="#8a8f9a"/><path d="M1 6 L6 1 L7 2 L2 7 Z" fill="#c8ccd4"/></svg>
<div class="bt" style="left:1955.9px;top:885px;color:#7b93ae;font-size:19px">服务工单</div>
<div class="btn" style="left:339px;top:948px;width:103px;height:46px"></div><svg class="abs" style="left:357px;top:962px" width="17" height="17" viewBox="0 0 17 17"><path d="M8.5 0.5 V16.5 M0.5 8.5 H16.5" stroke="#555" stroke-width="3"/></svg><div class="bt" style="left:384px;top:956.0px">新增</div>
<div class="btn" style="left:449px;top:948px;width:102px;height:46px"></div><svg class="abs" style="left:464px;top:960px" width="23" height="23" viewBox="0 0 23 23"><path d="M1 22 L2 16.5 L14 4.5 L18.5 9 L6.5 21 Z" fill="#555"/><path d="M3.5 17.5 L5.5 19.5" stroke="#fff" stroke-width="0"/><path d="M15.5 3 L17.8 0.7 L22.3 5.2 L20 7.5 Z" fill="#555"/></svg><div class="bt" style="left:494px;top:956.0px">修改</div>
<div class="btn" style="left:558px;top:948px;width:102px;height:46px"></div><svg class="abs" style="left:576px;top:963px" width="16" height="16" viewBox="0 0 16 16"><path d="M1 1 L15 15 M15 1 L1 15" stroke="#555" stroke-width="3"/></svg><div class="bt" style="left:603px;top:956.0px">删除</div>
<div class="btn" style="left:668px;top:948px;width:140px;height:46px"></div><svg class="abs" style="left:682px;top:962px" width="23" height="19" viewBox="0 0 23 19"><rect x="0.5" y="0.5" width="22" height="18" fill="#555"/><path d="M2 2.5 L11.5 11 L21 2.5 M2 17 L8.8 9.2 M21 17 L14.2 9.2" fill="none" stroke="#fff" stroke-width="1.6"/></svg><div class="bt" style="left:713px;top:956.0px">群发邮件</div>
<div class="btn" style="left:815px;top:948px;width:140px;height:46px"></div><svg class="abs" style="left:830px;top:960px" width="23" height="23" viewBox="0 0 23 23"><path d="M1 1 H22 V16.5 H7 L2.5 21 V16.5 H1 Z" fill="none" stroke="#555" stroke-width="2" stroke-linejoin="miter"/></svg><div class="bt" style="left:860px;top:956.0px">群发短信</div>
<div class="btn" style="left:962px;top:948px;width:121px;height:46px"></div><svg class="abs" style="left:976px;top:960px" width="23" height="23" viewBox="0 0 23 23"><circle cx="11.5" cy="11.5" r="10.3" fill="none" stroke="#555" stroke-width="2"/><path d="M10.5 5 V12.5 H16.5" fill="none" stroke="#555" stroke-width="2"/></svg><div class="bt" style="left:1007px;top:956.0px">时间轴</div>
<div class="btn" style="left:1090.6px;top:948px;width:140.20000000000005px;height:46px"></div><svg class="abs" style="left:1105px;top:960px" width="23" height="23" viewBox="0 0 23 23"><circle cx="11.5" cy="11.5" r="10.3" fill="none" stroke="#555" stroke-width="2"/><path d="M10.5 5 V12.5 H16.5" fill="none" stroke="#555" stroke-width="2"/></svg><div class="bt" style="left:1135.6px;top:956.0px">修改历史</div>
<div class="btn" style="left:1238.3px;top:948px;width:139.70000000000005px;height:46px"></div><svg class="abs" style="left:1253px;top:960px" width="23" height="23" viewBox="0 0 23 23"><path d="M1.5 0 V21.5 H23" fill="none" stroke="#555" stroke-width="2"/><path d="M3.5 13 L8 7.5 L13 11 L22 5.5 M3.5 18 L8 12.5 L13 16 L22 10.5" fill="none" stroke="#555" stroke-width="1.6"/></svg><div class="bt" style="left:1283.3px;top:956.0px">图表分析</div>
<div class="btn" style="left:1385.4px;top:948px;width:101.89999999999986px;height:46px"></div><svg class="abs" style="left:1400px;top:960px" width="23" height="23" viewBox="0 0 23 23"><path d="M11.5 0 V11" stroke="#555" stroke-width="3"/><path d="M5 8.5 L11.5 15.5 L18 8.5 Z" fill="#555"/><rect x="0" y="18" width="23" height="4.5" fill="#555"/></svg><div class="bt" style="left:1430.4px;top:956.0px">导入</div>
<div class="btn" style="left:1494.8px;top:948px;width:101.60000000000014px;height:46px"></div><svg class="abs" style="left:1510px;top:960px" width="23" height="23" viewBox="0 0 23 23"><path d="M11.5 5 V16" stroke="#555" stroke-width="3"/><path d="M5 7.5 L11.5 0.5 L18 7.5 Z" fill="#555"/><rect x="0" y="18" width="23" height="4.5" fill="#555"/></svg><div class="bt" style="left:1539.8px;top:956.0px">导出</div>
<div class="btn" style="left:1604.2px;top:948px;width:102.79999999999995px;height:46px"></div><svg class="abs" style="left:1619px;top:960px" width="23" height="23" viewBox="0 0 23 23"><circle cx="11.5" cy="11.5" r="10.3" fill="none" stroke="#f0b400" stroke-width="2"/><path d="M8 8.5 C8 5, 15 5, 15 8.5 C15 11, 11.5 11, 11.5 14" fill="none" stroke="#f0b400" stroke-width="2.2"/><circle cx="11.5" cy="17.5" r="1.4" fill="#f0b400"/></svg><div class="bt" style="left:1649.2px;top:956.0px">帮助</div>
<div class="abs" style="left:336px;top:1003px;width:2128px;height:55px;background:#f0f0f0"></div>
<div class="th" style="left:348px;top:1021px">姓名</div>
<div class="th" style="left:474px;top:1021px">客户</div>
<div class="th" style="left:839px;top:1021px">属性</div>
<div class="th" style="left:947.7px;top:1021px">所属部门</div>
<div class="th" style="left:1090px;top:1021px">职务</div>
<div class="th" style="left:1216px;top:1021px">组织角色</div>
<div class="th" style="left:1374px;top:1021px">手机</div>
<div class="th" style="left:1538.6px;top:1021px">邮箱</div>
<div class="th" style="left:1759.5px;top:1021px">电话</div>
<div class="th" style="left:1917.3px;top:1021px">任务</div>
<div class="th" style="left:2075px;top:1021px">所有者</div>
<div class="th" style="left:2193px;top:1021px">角色</div>
<div class="th" style="left:2335.6px;top:1021px">最后跟进时间</div>
<div class="td" style="left:348px;top:1080.4px">刘</div>
<div class="td lk" style="left:474px;top:1080.4px">杭州八骏科技有限公司</div>
<div class="tag" style="left:807px;top:1074px;width:101px;height:37px;border-radius:18.5px;line-height:37px;background:#8c4a8c">合作伙伴</div>
<div class="td lk" style="left:1375px;top:1080.4px">15556780391</div>
<div class="td lk" style="left:1917.3px;top:1080.4px">新增</div>
<div class="td" style="left:2075px;top:1080.4px">小麦</div>
<div class="td" style="left:2193px;top:1080.4px">信息化助理</div>
<div class="td" style="left:2335.6px;top:1080.4px">2021-11-11 14:28</div>
<div class="abs" style="left:391px;top:721px;width:238px;height:67px;border:2px solid #f5333c;border-radius:3px"></div>
<div class="abs" style="left:404px;top:787px;width:2px;height:46px;background:#f5333c"></div>
<div class="abs" style="left:375px;top:831.5px;width:56px;height:56px;border-radius:50%;background:#f83a3a;color:#fff;font-family:'Liberation Serif',serif;font-size:37px;line-height:54px;text-align:center">1</div>
<div class="abs" style="left:404px;top:728px;font-size:35px;line-height:48px;color:#f5333c">伙伴关联信息</div>
<div class="abs" style="left:1700px;top:7px;width:168px;height:67px;border:2px solid #f5333c;border-radius:3px"></div>
<div class="abs" style="left:1713px;top:73px;width:2px;height:40px;background:#f5333c"></div>
<div class="abs" style="left:1685.5px;top:110px;width:56px;height:56px;border-radius:50%;background:#f83a3a;color:#fff;font-family:'Liberation Serif',serif;font-size:37px;line-height:54px;text-align:center">2</div>
<div class="abs" style="left:1714px;top:14px;font-size:35px;line-height:48px;color:#f5333c">模块搜索</div>
<div class="abs" style="left:2264px;top:58px;width:167px;height:67px;border:2px solid #f5333c;border-radius:3px"></div>
<div class="abs" style="left:2294px;top:124px;width:2px;height:16px;background:#f5333c"></div>
<div class="abs" style="left:2267px;top:138px;width:56px;height:56px;border-radius:50%;background:#f83a3a;color:#fff;font-family:'Liberation Serif',serif;font-size:37px;line-height:54px;text-align:center">3</div>
<div class="abs" style="left:2278px;top:66px;font-size:35px;line-height:48px;color:#f5333c">方案查询</div>
</body></html>
